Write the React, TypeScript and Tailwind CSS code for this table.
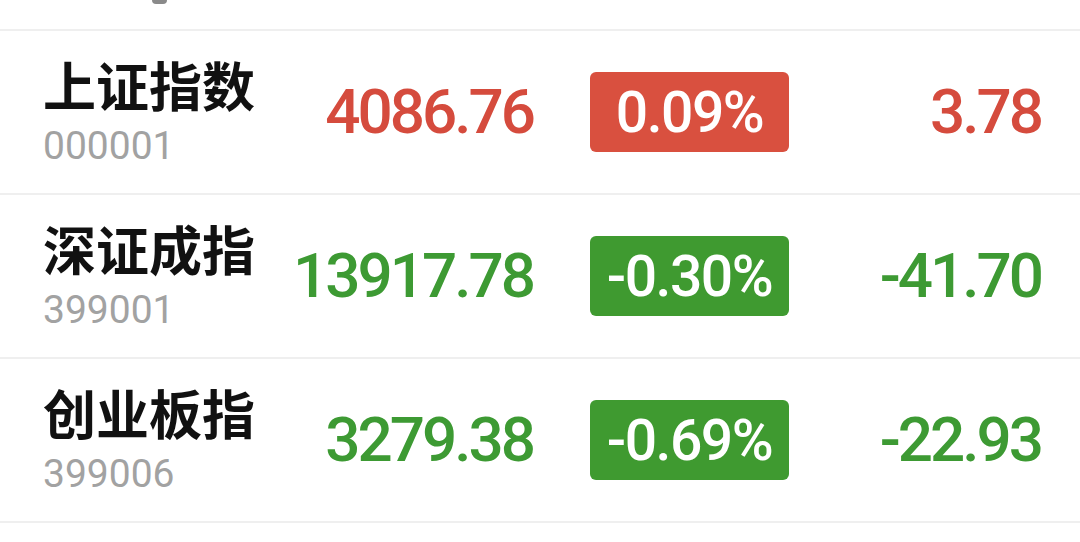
import React from 'react';

interface IndexRow {
  name: string;
  code: string;
  price: string;
  pct: string;
  change: string;
  up: boolean;
}

const ROWS: IndexRow[] = [
  { name: '上证指数', code: '000001', price: '4086.76', pct: '0.09%', change: '3.78', up: true },
  { name: '深证成指', code: '399001', price: '13917.78', pct: '-0.30%', change: '-41.70', up: false },
  { name: '创业板指', code: '399006', price: '3279.38', pct: '-0.69%', change: '-22.93', up: false },
];

const numFont = { fontFamily: 'Roboto, "Liberation Sans", sans-serif' };

function Row({ row }: { row: IndexRow }) {
  const textColor = row.up ? 'text-[#d54b3d]' : 'text-[#3d9a33]';
  const badgeColor = row.up ? 'bg-[#d9503f]' : 'bg-[#3f9a30]';

  return (
    <div className="flex h-[164px] items-center border-b-2 border-[#efefef]">
      <div className="ml-[43px] flex w-[240px] flex-col">
        <div
          className="text-[53px] font-bold leading-none text-[#111111]"
          style={{ fontFamily: '"Noto Sans CJK SC", "Noto Sans", sans-serif' }}
        >
          {row.name}
        </div>
        <div className="mt-[16px] text-[39px] leading-none text-[#a2a2a2]" style={numFont}>
          {row.code}
        </div>
      </div>

      <div
        className={`w-[250px] text-right text-[62px] font-medium leading-none tracking-[-3px] ${textColor}`}
        style={numFont}
      >
        {row.price}
      </div>

      <div
        className={`ml-[57px] flex h-[80px] w-[199px] items-center justify-center rounded-[6px] ${badgeColor}`}
      >
        <span className="text-[57px] font-medium leading-none tracking-[-1.5px] text-white" style={numFont}>
          {row.pct}
        </span>
      </div>

      <div
        className={`w-[252px] text-right text-[62px] font-medium leading-none tracking-[-3px] ${textColor}`}
        style={numFont}
      >
        {row.change}
      </div>
    </div>
  );
}

export default function App() {
  return (
    <div className="h-[542px] w-[1080px] overflow-hidden bg-white">
      {/* tail of the row scrolled off the top */}
      <div className="flex h-[31px] border-b-2 border-[#efefef] pl-[152px]">
        <div className="h-[4px] w-[15px] rounded-b-full bg-[#8a8a8a]" />
      </div>
      {ROWS.map((row) => (
        <Row key={row.code} row={row} />
      ))}
    </div>
  );
}
